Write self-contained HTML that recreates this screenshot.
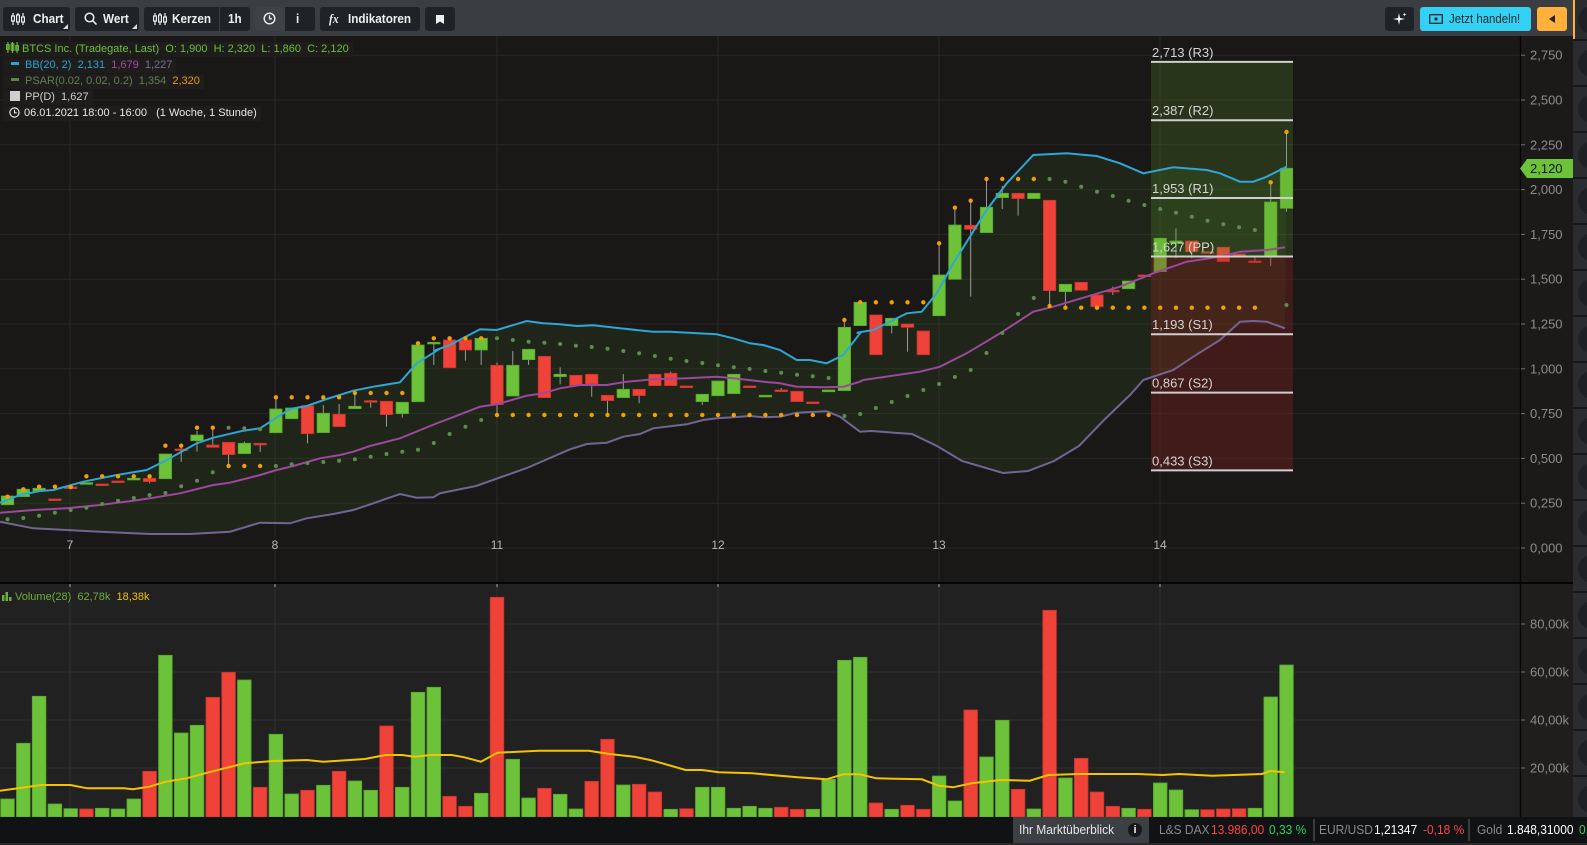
<!DOCTYPE html>
<html><head><meta charset="utf-8">
<style>
html,body{margin:0;padding:0;background:#191817;width:1587px;height:845px;overflow:hidden;font-family:"Liberation Sans",sans-serif}
#tb{position:absolute;left:0;top:0;width:1573px;height:36px;background:#3a3d42}
.btn{position:absolute;top:7px;height:24px;background:#1f2226;border-radius:3px;color:#eee;font-size:13px;font-weight:bold;line-height:24px;box-sizing:border-box}
.btn svg{position:absolute}
.btn span{transform:scaleX(0.9);transform-origin:0 50%;white-space:nowrap}
.lg{position:absolute;left:3px;font-size:11px;height:15px;line-height:15px;background:#1e1d1c;padding:0 4px 0 3px;white-space:nowrap}
#bb{position:absolute;left:0;top:817px;width:1587px;height:26px;background:#111214;font-size:13px;line-height:26px;white-space:nowrap}
#bb span{position:absolute;top:0;transform:scaleX(0.92);transform-origin:0 50%}
</style></head><body>
<svg id="c" width="1587" height="845" style="position:absolute;left:0;top:0"></svg>

<div id="tb"></div>
<div class="btn" style="left:3px;width:67px"><svg width="14" height="12" style="left:8px;top:6px" viewBox="0 0 14 12"><g stroke="#eee" stroke-width="1.2" fill="none"><line x1="2" y1="0" x2="2" y2="12"/><rect x="0.6" y="3" width="2.8" height="5" fill="#1f2226"/><line x1="7" y1="0" x2="7" y2="12"/><rect x="5.6" y="2" width="2.8" height="7" fill="#1f2226"/><line x1="12" y1="0" x2="12" y2="12"/><rect x="10.6" y="4" width="2.8" height="5" fill="#1f2226"/></g></svg><span style="position:absolute;left:30px">Chart</span><svg width="5" height="5" style="right:2px;bottom:2px"><polygon points="5,0 5,5 0,5" fill="#ddd"/></svg></div>
<div class="btn" style="left:75px;width:64px"><svg width="13" height="13" style="left:9px;top:5px"><circle cx="5.5" cy="5.5" r="4.3" stroke="#eee" stroke-width="1.5" fill="none"/><line x1="8.6" y1="8.6" x2="12.5" y2="12.5" stroke="#eee" stroke-width="1.6"/></svg><span style="position:absolute;left:28px">Wert</span><svg width="5" height="5" style="right:2px;bottom:2px"><polygon points="5,0 5,5 0,5" fill="#ddd"/></svg></div>
<div class="btn" style="left:144px;width:106px"><svg width="14" height="12" style="left:9px;top:6px" viewBox="0 0 14 12"><g stroke="#eee" stroke-width="1.2" fill="none"><line x1="2" y1="0" x2="2" y2="12"/><rect x="0.6" y="3" width="2.8" height="5" fill="#1f2226"/><line x1="7" y1="0" x2="7" y2="12"/><rect x="5.6" y="2" width="2.8" height="7" fill="#1f2226"/><line x1="12" y1="0" x2="12" y2="12"/><rect x="10.6" y="4" width="2.8" height="5" fill="#1f2226"/></g></svg><span style="position:absolute;left:28px">Kerzen</span><div style="position:absolute;left:75px;top:0;width:1px;height:24px;background:#3a3d42"></div><span style="position:absolute;left:84px">1h</span></div>
<div class="btn" style="left:255px;width:60px"><div style="position:absolute;left:0;top:0;width:30px;height:24px;background:#3e4146;border-radius:3px 0 0 3px"></div><svg width="13" height="13" style="left:8px;top:5px"><circle cx="6.5" cy="6.5" r="5.3" stroke="#eee" stroke-width="1.4" fill="none"/><path d="M6.5 3.2V6.8H9" stroke="#eee" stroke-width="1.3" fill="none"/></svg><span style="position:absolute;left:41px">i</span></div>
<div class="btn" style="left:320px;width:100px"><span style="position:absolute;left:9px;font-style:italic;font-family:'Liberation Serif',serif">fx</span><span style="position:absolute;left:28px">Indikatoren</span></div>
<div class="btn" style="left:425px;width:30px"><svg width="8" height="9" style="left:11px;top:8px"><path d="M0 0H8V9L4 6.5L0 9Z" fill="#eee"/></svg></div>
<div class="btn" style="left:1385px;width:29px"><svg width="14" height="14" style="left:8px;top:5px"><path d="M6 1L7 6L12 7L7 8L6 13L5 8L0 7L5 6Z" fill="#fff"/><path d="M11.5 0.5L12 2L13.5 2.5L12 3L11.5 4.5L11 3L9.5 2.5L11 2Z" fill="#fff"/></svg></div>
<div class="btn" style="left:1420px;width:111px;background:#33d1f3;color:#1b2a30;font-weight:normal"><svg width="14" height="10" style="left:9px;top:7px"><rect x="0.7" y="0.7" width="12.6" height="8.6" fill="none" stroke="#1b2a30" stroke-width="1.3"/><circle cx="7" cy="5" r="1.6" fill="#1b2a30"/></svg><span style="position:absolute;left:29px;transform:scaleX(0.88)">Jetzt handeln!</span></div>
<div class="btn" style="left:1537px;width:30px;background:#ffb13b"><svg width="6" height="8" style="left:12px;top:8px"><polygon points="6,0 6,8 0,4" fill="#222"/></svg></div>

<div class="lg" style="top:42px;color:#6dbf3a"><svg width="13" height="11" style="vertical-align:-1px;margin-right:3px" viewBox="0 0 14 12"><g stroke="#6dbf3a" stroke-width="1.2" fill="none"><line x1="2" y1="0" x2="2" y2="12"/><rect x="0.6" y="3" width="2.8" height="5"/><line x1="7" y1="0" x2="7" y2="12"/><rect x="5.6" y="2" width="2.8" height="7"/><line x1="12" y1="0" x2="12" y2="12"/><rect x="10.6" y="4" width="2.8" height="5"/></g></svg>BTCS Inc. (Tradegate, Last)&nbsp; O: 1,900&nbsp; H: 2,320&nbsp; L: 1,860&nbsp; C: 2,120</div>
<div class="lg" style="top:58px;color:#2aa4d4"><span style="display:inline-block;width:8px;height:3px;background:#2aa4d4;vertical-align:3px;margin:0 6px 0 5px"></span>BB(20, 2)&nbsp; 2,131&nbsp; <span style="color:#a04aa0">1,679</span>&nbsp; <span style="color:#776b9a">1,227</span></div>
<div class="lg" style="top:74px;color:#5f8050"><span style="display:inline-block;width:8px;height:3px;background:#5f8050;vertical-align:3px;margin:0 6px 0 5px"></span>PSAR(0.02, 0.02, 0.2)&nbsp; 1,354&nbsp; <span style="color:#e89a10">2,320</span></div>
<div class="lg" style="top:90px;color:#cfcfcf"><span style="display:inline-block;width:10px;height:10px;background:#cfcfcf;vertical-align:-1px;margin:0 5px 0 4px"></span>PP(D)&nbsp; 1,627</div>
<div class="lg" style="top:106px;color:#e8e8e8"><svg width="11" height="11" style="vertical-align:-2px;margin:0 4px 0 3px"><circle cx="5.5" cy="5.5" r="4.6" stroke="#e8e8e8" stroke-width="1.2" fill="none"/><path d="M5.5 2.8V5.8H7.8" stroke="#e8e8e8" stroke-width="1.1" fill="none"/></svg>06.01.2021 18:00 - 16:00 &nbsp;&nbsp;(1 Woche, 1 Stunde)</div>

<div style="position:absolute;left:2px;top:591px;font-size:11px;color:#6dae3a;white-space:nowrap"><svg width="10" height="9" style="vertical-align:-1px;margin-right:3px"><rect x="0" y="3" width="2.5" height="6" fill="#6dae3a"/><rect x="3.5" y="0" width="2.5" height="9" fill="#6dae3a"/><rect x="7" y="5" width="2.5" height="4" fill="#6dae3a"/></svg>Volume(28)&nbsp; 62,78k&nbsp; <span style="color:#f0c000">18,38k</span></div>

<div id="bb">
<div style="position:absolute;left:1013px;top:0;width:136px;height:26px;background:#3c3f44"></div>
<span style="left:1019px;color:#e6e6e6">Ihr Marktüberblick</span>
<div style="position:absolute;left:1128px;top:6px;width:14px;height:14px;border-radius:7px;background:#17181a;color:#eee;font-size:11px;line-height:14px;text-align:center;font-weight:bold">i</div>
<span style="left:1159px;color:#8a8a8a">L&amp;S DAX</span>
<span style="left:1211px;color:#ff4545">13.986,00</span>
<span style="left:1269px;color:#2fd35a">0,33 %</span>
<div style="position:absolute;left:1313px;top:2px;width:2px;height:22px;background:#3a3a3a"></div>
<span style="left:1319px;color:#8a8a8a">EUR/USD</span>
<span style="left:1374px;color:#fff">1,21347</span>
<span style="left:1423px;color:#ff4545">-0,18 %</span>
<div style="position:absolute;left:1468px;top:2px;width:2px;height:22px;background:#3a3a3a"></div>
<span style="left:1477px;color:#8a8a8a">Gold</span>
<span style="left:1507px;color:#fff">1.848,31000</span>
<span style="left:1579px;color:#2fd35a">0,</span>
</div>
<div style="position:absolute;left:0;top:843px;width:1587px;height:2px;background:#2a2a2a"></div>

<script>
var s='';
function R(x,y,w,h,f,extra){s+='<rect x="'+x+'" y="'+y+'" width="'+w+'" height="'+h+'" fill="'+f+'" '+(extra||'')+'/>';}
function L(x1,y1,x2,y2,c,w){s+='<line x1="'+x1+'" y1="'+y1+'" x2="'+x2+'" y2="'+y2+'" stroke="'+c+'" stroke-width="'+(w||1)+'"/>';}
function T(x,y,t,c,sz,anc){s+='<text x="'+x+'" y="'+y+'" fill="'+c+'" font-size="'+sz+'" font-family="Liberation Sans" '+(anc?'text-anchor="'+anc+'"':'')+'>'+t+'</text>';}
var X=function(i){return 7.5+15.79*i;};
var Y=function(p){return 548-179.2*p;};
R(0,36,1520,546,'#191817');
R(1520,36,53,546,'#1c1a19');
R(0,582,1573,2,'#050505');
R(0,584,1520,233,'#212121');
R(1520,584,53,233,'#1f1e1d');
L(1520.5,36,1520.5,817,'#050505',1.5);
R(1573,0,14,817,'#2a2c30');
R(1573,0,2,40,'#ffb13b');
for(var k=0;k<18;k++){var yy=40+k*46;L(1573,yy,1587,yy,'#16171a',2);s+='<circle cx="1592" cy="'+(yy+23)+'" r="14" fill="#1f2023"/>';}
s+='<circle cx="1592" cy="20" r="14" fill="#1f2023"/>';
var lab=['0,000','0,250','0,500','0,750','1,000','1,250','1,500','1,750','2,000','2,250','2,500','2,750'];
for(var k=0;k<12;k++){var y=Y(k*0.25);L(0,y,1520,y,'#282726',1);L(1521,y,1525,y,'#777',1);T(1530,y+4.5,lab[k],'#8c8c8c',13);}
var vl=['20,00k','40,00k','60,00k','80,00k'];
for(var k=1;k<=4;k++){var y=816-48*k;L(0,y,1520,y,'#2e2e2e',1);L(1521,y,1525,y,'#777',1);T(1530,y+4.5,vl[k-1],'#8c8c8c',13);}
var days=[[70,'7'],[275,'8'],[497,'11'],[718,'12'],[939,'13'],[1160,'14']];
days.forEach(function(d){L(d[0],36,d[0],582,'#282726',1);L(d[0],584,d[0],816,'#2e2e2e',1);L(d[0],584,d[0],587,'#aaa',1);T(d[0],549,d[1],'#b8b8b8',12,'middle');});

function P(ox,oy,arr,sx){sx=sx||3;return arr.map(function(a){return [ox+a[0]/sx,oy+a[1]/3];});}
var up=[].concat(
P(0,310,[[0,578],[60,555],[120,543],[160,540],[250,515],[350,495],[440,480],[500,450],[590,400],[640,383],[730,362],[780,355],[870,297],[920,288],[980,267],[1060,242],[1120,230],[1200,217],[1250,160],[1320,116]]),
P(420,290,[[40,183],[90,165],[180,118],[230,120],[320,93],[370,100],[420,103],[470,108],[520,106],[600,115],[700,125],[750,125],[890,133],[940,145],[990,160],[1030,165],[1080,180],[1130,210],[1170,210],[1220,220],[1270,195],[1320,130]]),
P(820,140,[[110,578],[160,570],[260,520],[305,515],[350,460],[400,370],[500,210],[560,130],[640,45],[740,40],[830,48],[900,70],[970,100],[1060,82],[1160,90],[1200,100],[1260,125],[1300,125],[1340,110],[1400,80]]));
var mid=[].concat(
P(0,310,[[0,608],[100,600],[200,595],[300,585],[400,572],[450,565],[540,550],[640,525],[690,518],[780,495],[830,480],[880,468],[960,445],[1020,435],[1060,425],[1110,408],[1200,385],[1320,336]]),
P(420,290,[[90,385],[180,350],[230,343],[320,317],[370,310],[420,295],[480,285],[560,285],[620,275],[700,268],[800,265],[890,260],[940,265],[1030,275],[1080,280],[1130,290],[1220,292],[1270,290],[1320,275]]),
P(820,140,[[130,720],[300,695],[360,680],[440,640],[540,580],[640,515],[700,500],[800,470],[900,440],[1000,400],[1100,365],[1200,350],[1260,335],[1340,330],[1395,322]]));
var lo=[].concat(
P(0,310,[[0,635],[100,655],[300,665],[450,672],[570,672],[690,665],[780,638],[870,640],[920,625],[1000,612],[1060,600],[1120,580],[1200,552],[1250,563],[1300,562],[1320,550]]),
[[476,486],[527,468]],
P(420,290,[[450,478],[500,462],[560,458],[610,440],[660,432],[700,415],[800,403],[850,390],[890,385],[940,382],[990,378],[1030,382],[1080,380],[1130,368],[1220,364],[1260,380],[1320,425]]),
[[871,431],[912,434],[937,446],[962,461],[1003,473],[1028,471],[1054,461],[1079,446],[1104,420],[1130,395]],
P(820,140,[[970,720],[1060,690],[1120,650],[1200,600],[1260,545],[1300,543],[1340,545],[1395,565]]));
function pts(a){return a.map(function(p){return p[0].toFixed(1)+','+p[1].toFixed(1);}).join(' ');}
s+='<polygon points="'+pts(up)+' '+pts(lo.slice().reverse())+'" fill="rgba(70,110,40,0.16)"/>';

var oy={6:310,7:290,8:140};
var C=[
[6,558,584,'g'],[6,538,560,'g'],[6,535,543,'g'],[6,567,569,'r'],[6,531,532,'r'],[6,518,521,'g'],[6,522,524,'r'],[6,513,515,'r'],[6,505,509,'g'],[6,505,515,'r',505,520],
[6,432,506,'g'],[6,417,419,'r',407,455],[6,375,392,'g',362,425],[6,405,412,'r',358,412],[6,397,434,'r',397,465],[6,400,431,'g',395,431],[6,400,404,'r',400,426],[6,297,368,'g',265,368],[6,294,326,'g'],[6,287,371,'r',287,400],
[6,310,368,'g',285,368],[6,313,350,'r',282,350],[6,289,296,'g',250,296],[6,272,274,'r',270,293],[6,274,314,'r',274,350],[6,277,311,'g',277,323],[6,105,275,'g'],[6,97,101,'g',97,165],
[7,150,233,'r'],[7,150,180,'r',150,212],[7,145,180,'g',145,225],[7,226,344,'r',218,370],[7,226,318,'g',183,318],[7,178,209,'g',178,225],[7,199,323,'r'],[7,253,260,'g',232,283],[7,256,287,'r'],[7,253,282,'r',253,320],
[7,316,332,'r',316,378],[7,298,323,'g',252,323],[7,298,317,'r',298,340],[7,253,287,'r'],[7,250,287,'r',245,287],[7,288,290,'r'],[7,313,335,'g',313,345],[7,273,317,'g'],[7,253,311,'g'],[7,288,290,'r'],
[7,316,320,'g'],[7,300,304,'r',294,304],[7,304,335,'r'],[7,336,338,'r'],[7,300,305,'g'],[7,112,302,'g',90,302],
[8,487,557,'g',480,557],[8,525,644,'r'],[8,535,557,'g',535,580],[8,552,562,'r',552,635],[8,573,644,'r'],[8,405,527,'g',310,527],[8,255,418,'g',200,418],[8,256,268,'r',182,470],[8,202,278,'g',117,278],[8,160,173,'g',138,207],
[8,160,176,'r',160,227],[8,160,176,'g'],[8,181,452,'r',181,498],[8,433,455,'g',433,498],[8,427,451,'r'],[8,465,500,'r'],[8,451,453,'r',440,465],[8,423,446,'g'],[8,405,407,'r'],[8,295,395,'g'],
[8,303,310,'g',265,355],[8,303,335,'r',303,355],[8,335,337,'r'],[8,322,365,'r'],[8,342,344,'r'],[8,363,365,'r',350,365],[8,186,350,'g',127,378],[8,85,205,'g',-24,215]];
C.forEach(function(c,i){var o=oy[c[0]],x=X(i),t=o+c[1]/3,b=o+c[2]/3;var wt=c.length>4?o+c[4]/3:t,wb=c.length>4?o+c[5]/3:b;
 if(wt<t||wb>b)L(x,wt,x,wb,'#9a9a9a',1);
 var g=c[3]=='g';R((x-6.2).toFixed(1),t.toFixed(1),12.4,Math.max(b-t,1.6).toFixed(1),g?'#6cc33a':'#ef4238','stroke="'+(g?'#58a52c':'#c8322c')+'" stroke-width="0.8"');});

var pl=1151,pr=1293;
R(pl,Y(2.713),pr-pl,Y(1.627)-Y(2.713),'rgba(95,160,45,0.22)');
R(pl,Y(1.627),pr-pl,Y(0.433)-Y(1.627),'rgba(150,35,30,0.32)');

s+='<polyline points="'+pts(lo)+'" fill="none" stroke="#716594" stroke-width="2"/>';
s+='<polyline points="'+pts(mid)+'" fill="none" stroke="#9d479e" stroke-width="2"/>';
s+='<polyline points="'+pts(up)+'" fill="none" stroke="#2ea6d6" stroke-width="2"/>';

function dot(i,y,c,r){s+='<circle cx="'+X(i).toFixed(1)+'" cy="'+y.toFixed(1)+'" r="'+r+'" fill="'+c+'"/>';}
var o6=[560,538,530,530,531,499,499,499,499,499,407,407,353,353,468,468,468,262,262,262,262,262,249,249,249,249,100,85];
o6.forEach(function(v,i){dot(i,310+v/3,'#f2a000',2.2);});
var g6=[628,624,617,608,600,593,582,572,564,555,549,529,512,487,353,355,358,468,463,459,456,452,448,440,432,425,419,399];
g6.forEach(function(v,i){dot(i,310+v/3,'#5f8a52',2);});
[28,29,30].forEach(function(i){dot(i,290+145/3,'#f2a000',2.2);});
[[28,432],[29,410],[30,390]].forEach(function(a){dot(a[0],290+a[1]/3,'#5f8a52',2);});
var g7=[145,150,155,158,162,167,171,176,183,190,198,206,213,219,226,232,237,243,248,254,259,264];
g7.forEach(function(v,k){dot(31+k,290+v/3,'#5f8a52',2);dot(31+k,290+375/3,'#f2a000',2.2);});
var o8=[540,487,487,487,487,487,310,203,182,117,117,117,117];
o8.forEach(function(v,k){dot(53+k,140+v/3,'#f2a000',2.2);});
for(var i=66;i<=79;i++)dot(i,140+(i==66?498:503)/3,'#f2a000',2.2);
dot(80,140+127/3,'#f2a000',2.2);dot(81,132,'#f2a000',2.2);
var gb=[416,414,408,402,396,390,384,377,370,353,333,314,298];
gb.forEach(function(v,k){dot(53+k,v,'#5f8a52',2);});
var ga=[117,125,140,155,168,182,195,207,218,230,242,253,262,270];
ga.forEach(function(v,k){dot(66+k,140+v/3,'#5f8a52',2);});
dot(81,140+495/3,'#5f8a52',2);

[[2.713,'2,713 (R3)'],[2.387,'2,387 (R2)'],[1.953,'1,953 (R1)'],[1.627,'1,627 (PP)'],[1.193,'1,193 (S1)'],[0.867,'0,867 (S2)'],[0.433,'0,433 (S3)']].forEach(function(p){var y=Y(p[0]);L(pl,y,pr,y,'#cfcfcf',2);T(pl+1,y-5,p[1],'#d4d4d4',13);});

s+='<polygon points="1520,168.5 1527,159 1573,159 1573,178 1527,178" fill="#6cc33a"/>';
T(1530,173,'2,120','#111',13);

var V=[[657,'g'],[490,'g'],[349,'g'],[672,'g'],[686,'g'],[687,'r'],[685,'g'],[687,'g'],[657,'g'],[574,'r'],
[226,'g'],[459,'g'],[436,'g'],[352,'r'],[277,'r'],[300,'g'],[622,'r'],[463,'g'],[642,'g'],[631,'r'],
[616,'g'],[574,'r'],[603,'g'],[631,'g'],[438,'r'],[622,'g'],[337,'g'],[322,'g'],[649,'r'],[679,'r'],
[640,'g'],[52,'r'],[538,'g'],[654,'g'],[625,'r'],[643,'g'],[687,'g'],[604,'r'],[478,'r'],[615,'g'],
[613,'r'],[636,'r'],[688,'g'],[686,'r'],[622,'g'],[622,'g'],[685,'g'],[679,'g'],[685,'g'],[682,'r'],
[688,'r'],[688,'g'],[598,'g'],[241,'g'],[232,'g'],[669,'r'],[688,'g'],[676,'r'],[688,'r'],[588,'g'],
[663,'g'],[390,'r'],[531,'g'],[421,'g'],[628,'r'],[687,'g'],[91,'r'],[594,'g'],[535,'r'],[636,'r'],
[679,'r'],[685,'g'],[688,'r'],[609,'g'],[630,'g'],[689,'g'],[689,'r'],[687,'r'],[686,'r'],[685,'g'],[351,'g'],[255,'g']];
V.forEach(function(v,i){var x=X(i),t=580+v[0]/3;var g=v[1]=='g';R((x-6.8).toFixed(1),t.toFixed(1),13.6,(817-t).toFixed(1),g?'#6cc33a':'#ef4238','stroke="'+(g?'#58a52c':'#c8322c')+'" stroke-width="0.8"');});
var ma=[].concat(
P(0,580,[[0,632],[100,615],[170,615],[210,625],[300,625],[320,628],[360,620],[400,605],[450,595],[500,578],[590,550],[660,543],[740,540],[780,545],[880,537],[930,525],[970,525],[1000,530],[1040,525],[1090,525],[1120,532],[1160,545],[1200,518],[1300,512],[1420,512],[1470,522],[1530,530],[1568,540]],2.412),
P(640,580,[[40,545],[110,570],[150,570],[190,577],[270,580],[380,592],[450,598],[490,583],[530,583],[570,595],[680,598],[720,617],[755,622],[800,610],[870,600],[940,602],[985,585],[1060,582],[1200,582],[1260,585],[1300,582],[1380,587],[1500,582],[1520,573],[1555,577]],2.412));
s+='<polyline points="'+pts(ma)+'" fill="none" stroke="#f5c400" stroke-width="2"/>';
document.getElementById('c').innerHTML=s;
</script>
</body></html>
